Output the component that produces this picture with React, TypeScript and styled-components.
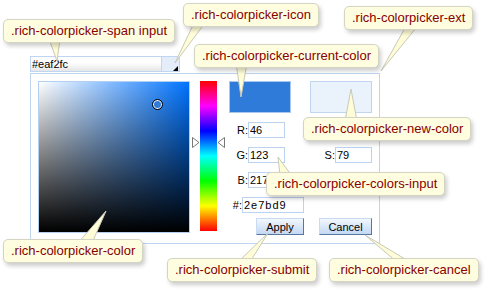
import styled, { createGlobalStyle } from 'styled-components';

const GlobalStyle = createGlobalStyle`
  html, body {
    margin: 0;
    padding: 0;
    background: #fff;
  }
  body {
    font-family: 'Liberation Sans', Arial, sans-serif;
  }
`;

const current = { r: 46, g: 123, b: 217, hex: '2e7bd9', h: 213, s: 79, v: 85 };

const Page = styled.div`
  position: relative;
  width: 500px;
  height: 300px;
  overflow: hidden;
  box-sizing: border-box;
  padding: 56px 0 0 30px;
  background: #fff;
`;

const Picker = styled.div`
  width: 350px;
  font-family: 'Liberation Sans', Arial, sans-serif;
  font-size: 11px;
  color: #000;
`;

const SpanRow = styled.div`
  display: flex;
  height: 16px;
`;

const SpanInput = styled.input`
  box-sizing: border-box;
  width: 132px;
  height: 16px;
  margin: 0;
  padding: 0 1px;
  border: 1px solid #c0d5f0;
  background: linear-gradient(#fff 0%, #fff 40%, #e6e6e6 100%);
  font: 11px 'Liberation Sans', Arial, sans-serif;
  color: #000;
  outline: none;
`;

const IconBox = styled.div`
  box-sizing: border-box;
  width: 18px;
  height: 16px;
  border: 1px solid #c0d5f0;
  border-left: none;
  background: #e4edf9;
  display: flex;
  align-items: flex-end;
  justify-content: flex-end;
  padding-right: 1px;
`;

const IconArrow = styled.span`
  width: 0;
  height: 0;
  border-left: 5px solid transparent;
  border-bottom: 5px solid #000;
`;

const Panel = styled.div`
  box-sizing: border-box;
  margin-top: 1px;
  width: 350px;
  height: 171px;
  border: 1px solid #c0d5f0;
  background: #fff;
  padding: 7px 0 0 7px;
  display: flex;
  align-items: flex-start;
`;

const ColorArea = styled.div<{ $hue: string }>`
  position: relative;
  box-sizing: border-box;
  width: 152px;
  height: 152px;
  border: 1px solid #b4cff0;
  background: linear-gradient(to top, #000, rgba(0, 0, 0, 0)),
    linear-gradient(to right, #fff, rgba(255, 255, 255, 0)), ${(p) => p.$hue};
`;

const Marker = styled.span`
  position: absolute;
  width: 11px;
  height: 11px;
  margin: -6px 0 0 -6px;
  box-sizing: border-box;
  border-radius: 50%;
  border: 1px solid #000;
  box-shadow: inset 0 0 0 1px #fff;
  background: #2e7bd9;
`;

const HueWrap = styled.div`
  position: relative;
  margin-left: 10px;
  width: 17px;
  height: 150px;
`;

const HueStrip = styled.div`
  width: 100%;
  height: 100%;
  background: linear-gradient(
    #f00 0%,
    #f0f 16.66%,
    #00f 33.33%,
    #0ff 50%,
    #0f0 66.66%,
    #ff0 83.33%,
    #f00 100%
  );
`;

const HueArrow = styled.svg<{ $side: 'left' | 'right' }>`
  position: absolute;
  width: 8px;
  height: 11px;
  ${(p) => (p.$side === 'left' ? 'left: -8px;' : 'right: -8px;')}
`;

const Controls = styled.div`
  margin-left: 12px;
  display: flex;
  flex-direction: column;
`;

const Swatches = styled.div`
  display: flex;
  gap: 19px;
`;

const Swatch = styled.div<{ $color: string; $edge: string }>`
  box-sizing: border-box;
  width: 62px;
  height: 32px;
  border: 1px solid ${(p) => p.$edge};
  background: ${(p) => p.$color};
`;

const FieldRow = styled.div<{ $gap: number }>`
  display: flex;
  align-items: center;
  height: 16px;
  margin-top: ${(p) => p.$gap}px;
`;

const Label = styled.span<{ $w: number }>`
  width: ${(p) => p.$w}px;
  text-align: right;
  line-height: 16px;
  white-space: nowrap;
`;

const Field = styled.input<{ $w: number; $spread?: boolean }>`
  box-sizing: border-box;
  width: ${(p) => p.$w}px;
  height: 16px;
  margin: 0;
  padding: 0 1px;
  border: 1px solid #bcd3f0;
  background: #fff;
  font: 11px 'Liberation Sans', Arial, sans-serif;
  letter-spacing: ${(p) => (p.$spread ? '1px' : '0')};
  color: #000;
  outline: none;
`;

const ButtonRow = styled.div`
  display: flex;
  gap: 15px;
  margin-top: 5px;
  padding-left: 27px;
`;

const Button = styled.button<{ $w: number }>`
  box-sizing: border-box;
  width: ${(p) => p.$w}px;
  height: 17px;
  margin: 0;
  padding: 0;
  font: 11px 'Liberation Sans', Arial, sans-serif;
  color: #000;
  background: linear-gradient(#f2f7fd, #c3d8f4);
  border: 1px solid;
  border-color: #c8dbf3 #5877a0 #5877a0 #c8dbf3;
`;

const Tails = styled.svg`
  position: absolute;
  left: 0;
  top: 0;
  z-index: 2;
  pointer-events: none;
`;

const Callout = styled.div<{ $x: number; $y: number }>`
  position: absolute;
  left: ${(p) => p.$x}px;
  top: ${(p) => p.$y}px;
  z-index: 3;
  box-sizing: border-box;
  height: 24px;
  padding: 0 7px;
  border: 1px solid #d4d4c4;
  border-radius: 5px;
  background: #fffddf;
  color: #860000;
  font: 13px/22px 'Liberation Sans', Arial, sans-serif;
  white-space: nowrap;
  box-shadow: 2px 3px 4px rgba(0, 0, 0, 0.2);
`;

type Note = {
  text: string;
  x: number;
  y: number;
  // tail: base from bx1..bx2 at by (edge of box), tip at tx,ty
  bx1: number;
  bx2: number;
  by: number;
  tx: number;
  ty: number;
};

const notes: Note[] = [
  { text: '.rich-colorpicker-span input', x: 3, y: 19, bx1: 49, bx2: 60, by: 42, tx: 57, ty: 61 },
  { text: '.rich-colorpicker-icon', x: 183, y: 3, bx1: 194, bx2: 205, by: 26, tx: 175, ty: 63 },
  { text: '.rich-colorpicker-ext', x: 344, y: 6, bx1: 405, bx2: 416, by: 31, tx: 381, ty: 71 },
  { text: '.rich-colorpicker-current-color', x: 194, y: 44, bx1: 236, bx2: 247, by: 66, tx: 241, ty: 97 },
  { text: '.rich-colorpicker-new-color', x: 303, y: 117, bx1: 345, bx2: 357, by: 118, tx: 351, ty: 89 },
  { text: '.rich-colorpicker-colors-input', x: 266, y: 172, bx1: 280, bx2: 292, by: 173, tx: 278, ty: 157 },
  { text: '.rich-colorpicker-color', x: 3, y: 239, bx1: 78, bx2: 92, by: 240, tx: 106, ty: 211 },
  { text: '.rich-colorpicker-submit', x: 167, y: 258, bx1: 238, bx2: 250, by: 259, tx: 268, ty: 233 },
  { text: '.rich-colorpicker-cancel', x: 329, y: 258, bx1: 397, bx2: 410, by: 259, tx: 365, ty: 235 },
];

function tailPoints(n: Note) {
  // push the base a little into the box so its edge hides under the callout
  const inset = n.ty > n.by ? -3 : 3;
  const y = n.by + inset;
  return `${n.bx1},${y} ${n.bx2},${y} ${n.tx},${n.ty}`;
}

const App = () => {
  const hueTop = ((360 - current.h) / 360) * 150;
  const markerX = (current.s / 100) * 150;
  const markerY = (1 - current.v / 100) * 150;

  return (
    <Page>
      <GlobalStyle />
      <Picker>
        <SpanRow>
          <SpanInput readOnly value="#eaf2fc" />
          <IconBox>
            <IconArrow />
          </IconBox>
        </SpanRow>
        <Panel>
          <ColorArea $hue="rgb(0, 115, 255)">
            <Marker style={{ left: markerX, top: markerY }} />
          </ColorArea>
          <HueWrap>
            <HueStrip />
            <HueArrow $side="left" viewBox="0 0 8 11" style={{ top: hueTop - 5 }}>
              <path d="M0.5 0.5 L7 5.5 L0.5 10.5 Z" fill="#fff" stroke="#777" strokeWidth="1" />
            </HueArrow>
            <HueArrow $side="right" viewBox="0 0 8 11" style={{ top: hueTop - 5 }}>
              <path d="M7.5 0.5 L1 5.5 L7.5 10.5 Z" fill="#fff" stroke="#777" strokeWidth="1" />
            </HueArrow>
          </HueWrap>
          <Controls>
            <Swatches>
              <Swatch $color="#2e7bd9" $edge="#a9c8ee" />
              <Swatch $color="#eaf2fc" $edge="#c0d5f0" />
            </Swatches>
            <FieldRow $gap={9}>
              <Label $w={19}>R:</Label>
              <Field $w={37} readOnly value={String(current.r)} />
            </FieldRow>
            <FieldRow $gap={9}>
              <Label $w={19}>G:</Label>
              <Field $w={37} readOnly value={String(current.g)} />
              <Label $w={50}>S:</Label>
              <Field $w={37} readOnly value={String(current.s)} />
            </FieldRow>
            <FieldRow $gap={9}>
              <Label $w={19}>B:</Label>
              <Field $w={37} readOnly value={String(current.b)} />
            </FieldRow>
            <FieldRow $gap={9}>
              <Label $w={13}>#:</Label>
              <Field $w={62} $spread readOnly value={current.hex} />
            </FieldRow>
            <ButtonRow>
              <Button $w={48}>Apply</Button>
              <Button $w={53}>Cancel</Button>
            </ButtonRow>
          </Controls>
        </Panel>
      </Picker>

      <Tails width="500" height="300" viewBox="0 0 500 300">
        {notes.map((n) => (
          <polygon
            key={n.text}
            points={tailPoints(n)}
            fill="#fffcd8"
            stroke="#c9c9b8"
            strokeWidth="1"
            strokeLinejoin="round"
          />
        ))}
      </Tails>

      {notes.map((n) => (
        <Callout key={n.text} $x={n.x} $y={n.y}>
          {n.text}
        </Callout>
      ))}
    </Page>
  );
};

export default App;
